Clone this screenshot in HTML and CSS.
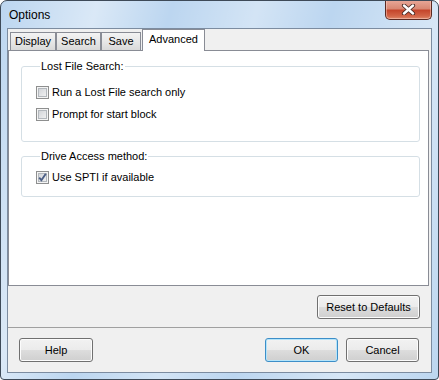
FILE: index.html
```html
<!DOCTYPE html>
<html lang="en">
<head>
    <meta charset="UTF-8">
    <title>Options</title>
    <link rel="stylesheet" href="styles.css">
</head>
<body>
    <div class="window">
        <div class="titlebar">
            <span class="title">Options</span>
        </div>
        <div class="close-btn">
            <svg width="17" height="11" viewBox="0 0 17 11">
                <path d="M4 1.5 L13 9.5 M13 1.5 L4 9.5" stroke="#4a2a24" stroke-width="4.2" stroke-linecap="round"/>
                <path d="M4 1.5 L13 9.5 M13 1.5 L4 9.5" stroke="#ffffff" stroke-width="2.4" stroke-linecap="round"/>
            </svg>
        </div>

        <div class="client">
            <div class="tabs">
                <div class="tab tab-display">Display</div>
                <div class="tab tab-search">Search</div>
                <div class="tab tab-save">Save</div>
                <div class="tab tab-advanced active">Advanced</div>
            </div>

            <div class="panel">
                <fieldset class="group group-lost">
                    <legend>Lost File Search:</legend>
                    <label class="row"><span class="check"></span>Run a Lost File search only</label>
                    <label class="row"><span class="check"></span>Prompt for start block</label>
                </fieldset>
                <fieldset class="group group-drive">
                    <legend>Drive Access method:</legend>
                    <label class="row">
                        <span class="check">
                            <svg width="11" height="11" viewBox="0 0 11 11">
                                <path d="M2.2 5.6 L4.4 8.2 L8.8 1.8" fill="none" stroke="#4c5f86" stroke-width="1.9"/>
                            </svg>
                        </span>Use SPTI if available
                    </label>
                </fieldset>
            </div>

            <div class="reset-row">
                <button class="btn btn-reset">Reset to Defaults</button>
            </div>

            <div class="footer">
                <button class="btn btn-help">Help</button>
                <div class="spacer"></div>
                <button class="btn btn-ok">OK</button>
                <button class="btn btn-cancel">Cancel</button>
            </div>
        </div>
    </div>
</body>
</html>
```

FILE: styles.css
```css
:root {
    --ui-font: 'Liberation Sans', Arial, sans-serif;
    --tab-border: #898c95;
    --face: #f0f0f0;
}

body {
    margin: 0;
    padding: 0;
    font-family: var(--ui-font);
    font-size: 11px;
    color: #000;
}

.window {
    position: relative;
    width: 439px;
    height: 380px;
    box-sizing: border-box;
    border: 1px solid #3e4a58;
    border-radius: 7px 7px 4px 4px;
    background:
        linear-gradient(105deg, rgba(255,255,255,0) 0%, rgba(255,255,255,0.45) 18%, rgba(255,255,255,0) 32%, rgba(255,255,255,0.35) 48%, rgba(255,255,255,0) 62%, rgba(255,255,255,0.4) 82%, rgba(255,255,255,0) 100%),
        #bcd6f0;
    display: flex;
    flex-direction: column;
    overflow: hidden;
}

.titlebar {
    height: 27px;
    display: flex;
    align-items: center;
    padding-left: 8px;
}

.title {
    font-size: 12px;
    color: #000;
    margin-top: 1px;
}

.close-btn {
    position: absolute;
    top: -1px;
    right: 6px;
    width: 47px;
    height: 20px;
    box-sizing: border-box;
    border: 1px solid #5b2a22;
    border-top: none;
    border-radius: 0 0 5px 5px;
    background: linear-gradient(#e9a99a 0%, #d98873 45%, #c5462c 55%, #d36648 85%, #e08a6c 100%);
    box-shadow: inset 0 0 0 1px rgba(255, 220, 210, 0.45);
    display: flex;
    align-items: center;
    justify-content: center;
}

.client {
    margin: 0 6px 6px 6px;
    flex: 1;
    border: 1px solid #7c8ca0;
    background: var(--face);
    display: flex;
    flex-direction: column;
}

/* tab strip */
.tabs {
    height: 21px;
    display: flex;
    align-items: flex-end;
    padding-left: 2px;
}

.tab {
    box-sizing: border-box;
    height: 18px;
    border: 1px solid var(--tab-border);
    border-bottom: none;
    background: linear-gradient(#f3f3f3, #e6e6e6 55%, #d9d9d9);
    text-align: center;
    line-height: 17px;
}

.tab-display { width: 46px; }
.tab-search { width: 45px; }
.tab-save { width: 40px; }

.tab.active {
    position: relative;
    z-index: 1;
    width: 63px;
    height: 22px;
    margin-left: 1px;
    margin-bottom: -1px;
    background: #fff;
    line-height: 19px;
}

.panel {
    box-sizing: border-box;
    width: 421px;
    height: 236px;
    border: 1px solid var(--tab-border);
    background: #fff;
    padding: 8px 8px 0 12px;
}

/* group boxes */
.group {
    margin: 0;
    padding: 0 0 0 14px;
    border: 1px solid #d5dfe5;
    border-radius: 3px;
}

.group legend {
    padding: 0 1px;
    margin-left: 4px;
    line-height: 15px;
}

.group-lost {
    padding-top: 7px;
    padding-bottom: 16px;
}

.group-drive {
    margin-top: 7px;
    padding-top: 2px;
    padding-bottom: 8px;
}

.row {
    height: 22px;
    display: flex;
    align-items: center;
    gap: 3px;
}

.check {
    box-sizing: border-box;
    width: 13px;
    height: 13px;
    border: 1px solid #8e8f8f;
    background: linear-gradient(135deg, #cbced3, #f7f7f7);
    box-shadow: inset 0 0 0 1px #f4f4f4, inset 0 0 0 2px #b3b8bd;
    display: flex;
    align-items: center;
    justify-content: center;
}

/* buttons */
.btn {
    box-sizing: border-box;
    height: 24px;
    font-family: var(--ui-font);
    font-size: 11px;
    color: #000;
    border: 1px solid #707070;
    border-radius: 3px;
    background: linear-gradient(#f2f2f2 0%, #ebebeb 50%, #dddddd 50%, #cfcfcf 100%);
    box-shadow: inset 0 0 0 1px #fcfcfc;
    padding: 0;
}

.reset-row {
    height: 41px;
    display: flex;
    align-items: center;
    justify-content: flex-end;
    padding-right: 11px;
}

.btn-reset { width: 103px; }

.footer {
    flex: 1;
    border-top: 1px solid #a0a0a0;
    display: flex;
    align-items: flex-start;
    padding: 10px 12px 0 11px;
    gap: 8px;
}

.spacer { flex: 1; }

.btn-help { width: 74px; }
.btn-cancel { width: 73px; }

.btn-ok {
    width: 73px;
    border-color: #3c8ec8;
    box-shadow: inset 0 0 0 1px #b4e4fa;
}
```
